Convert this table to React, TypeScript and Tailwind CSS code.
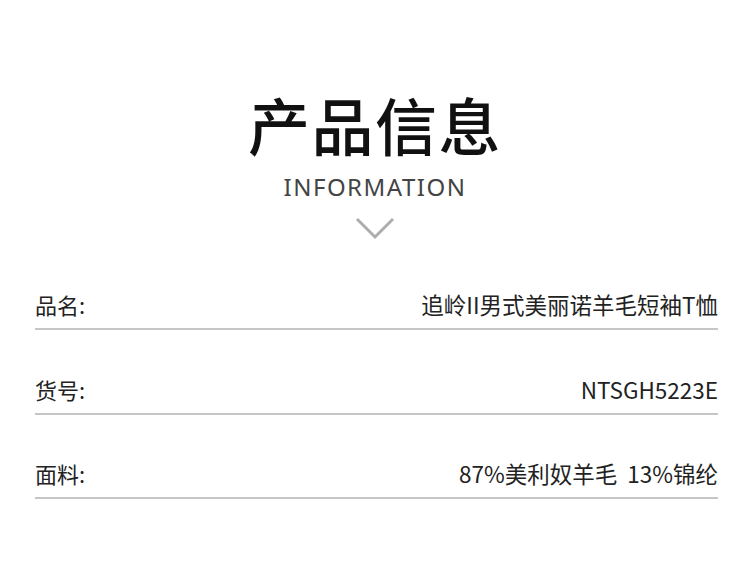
import React from 'react';

const rows = [
  { label: '品名:', value: '追岭II男式美丽诺羊毛短袖T恤' },
  { label: '货号:', value: 'NTSGH5223E' },
  { label: '面料:', value: '87%美利奴羊毛  13%锦纶' },
];

const cjk = { fontFamily: '"Noto Sans CJK SC", sans-serif' };

export default function App() {
  return (
    <div
      className="w-[750px] h-[567px] bg-white overflow-hidden"
      style={{ fontFamily: '"Noto Sans", "Noto Sans CJK SC", sans-serif' }}
    >
      {/* 标题 */}
      <div className="flex flex-col items-center pt-[93px]">
        <h1 className="text-[62px] leading-none font-medium text-[#111] tracking-[1.5px]" style={cjk}>
          产品信息
        </h1>
        <p className="mt-[20px] text-[24px] leading-none text-[#444] tracking-[1.5px]">INFORMATION</p>
        <svg className="mt-[17px]" width="40" height="24" viewBox="0 0 40 24">
          <polyline points="2,3 20,21 38,3" fill="none" stroke="#adadad" strokeWidth="3" />
        </svg>
      </div>

      {/* 参数列表 */}
      <div className="pl-[35px] pr-[32px]">
        {rows.map((row, i) => (
          <div
            key={row.label}
            className={`flex items-center justify-between pb-[9px] border-b-2 border-[#c6c6c6] ${i === 0 ? 'pt-[49px]' : 'pt-[43.5px]'}`}
            style={cjk}
          >
            <span className="text-[22px] leading-[30px] text-[#222]">{row.label}</span>
            <span className="text-[22.5px] leading-[30px] text-[#222] whitespace-pre">{row.value}</span>
          </div>
        ))}
      </div>
    </div>
  );
}
